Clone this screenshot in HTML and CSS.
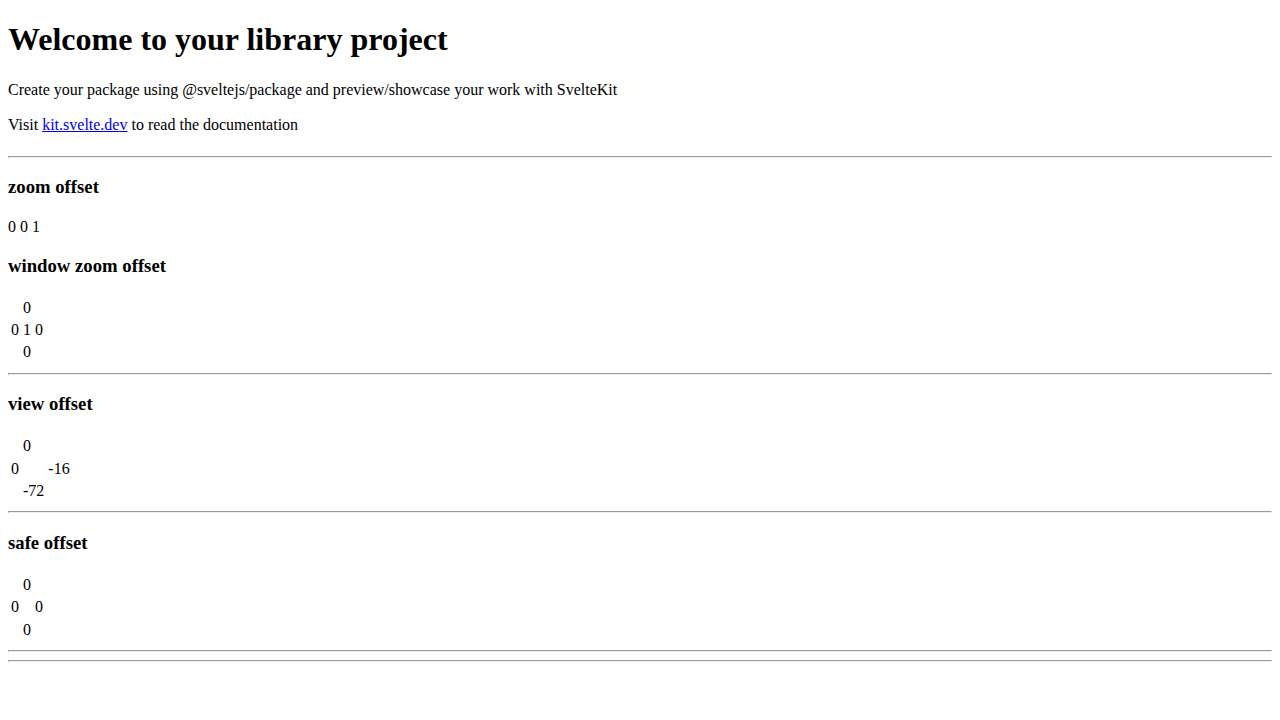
FILE: index.html
```html
<!DOCTYPE html>
<html lang="en">
<head>
<meta charset="utf-8">
<title>Library project</title>
<link rel="stylesheet" href="styles.css">
</head>
<body class="page">
<h1 class="title">Welcome to your library project</h1>
<p class="text">Create your package using @sveltejs/package and preview/showcase your work with SvelteKit</p>
<p class="text">Visit <a href="https://kit.svelte.dev">kit.svelte.dev</a> to read the documentation</p>
<hr class="intro-end">
<h3 class="label">zoom offset</h3>
<p class="text">0 0 1</p>
<h3 class="label">window zoom offset</h3>
<table class="grid">
<tr><td></td><td>0</td><td></td></tr>
<tr><td>0</td><td>1</td><td>0</td></tr>
<tr><td></td><td>0</td><td></td></tr>
</table>
<hr>
<h3 class="label">view offset</h3>
<table class="grid">
<tr><td></td><td>0</td><td></td></tr>
<tr><td>0</td><td></td><td>-16</td></tr>
<tr><td></td><td>-72</td><td></td></tr>
</table>
<hr>
<h3 class="label">safe offset</h3>
<table class="grid">
<tr><td></td><td>0</td><td></td></tr>
<tr><td>0</td><td></td><td>0</td></tr>
<tr><td></td><td>0</td><td></td></tr>
</table>
<hr>
<hr>
</body>
</html>
```
FILE: styles.css
```css
.page {
  margin: 0;
  padding: 8px;
  font-family: "Liberation Serif", "Times New Roman", serif;
  line-height: 1.15;
  color: #000;
  background: #fff;
}
.title {
  margin-top: 13.44px;
  line-height: 1.15;
}
.text {
  line-height: 19px;
}
.label {
  line-height: 22px;
}
.intro-end {
  margin-top: 22px;
}
.grid {
  border-spacing: 2px;
}
.grid td {
  padding: 1px;
  line-height: 18.4px;
}
```
